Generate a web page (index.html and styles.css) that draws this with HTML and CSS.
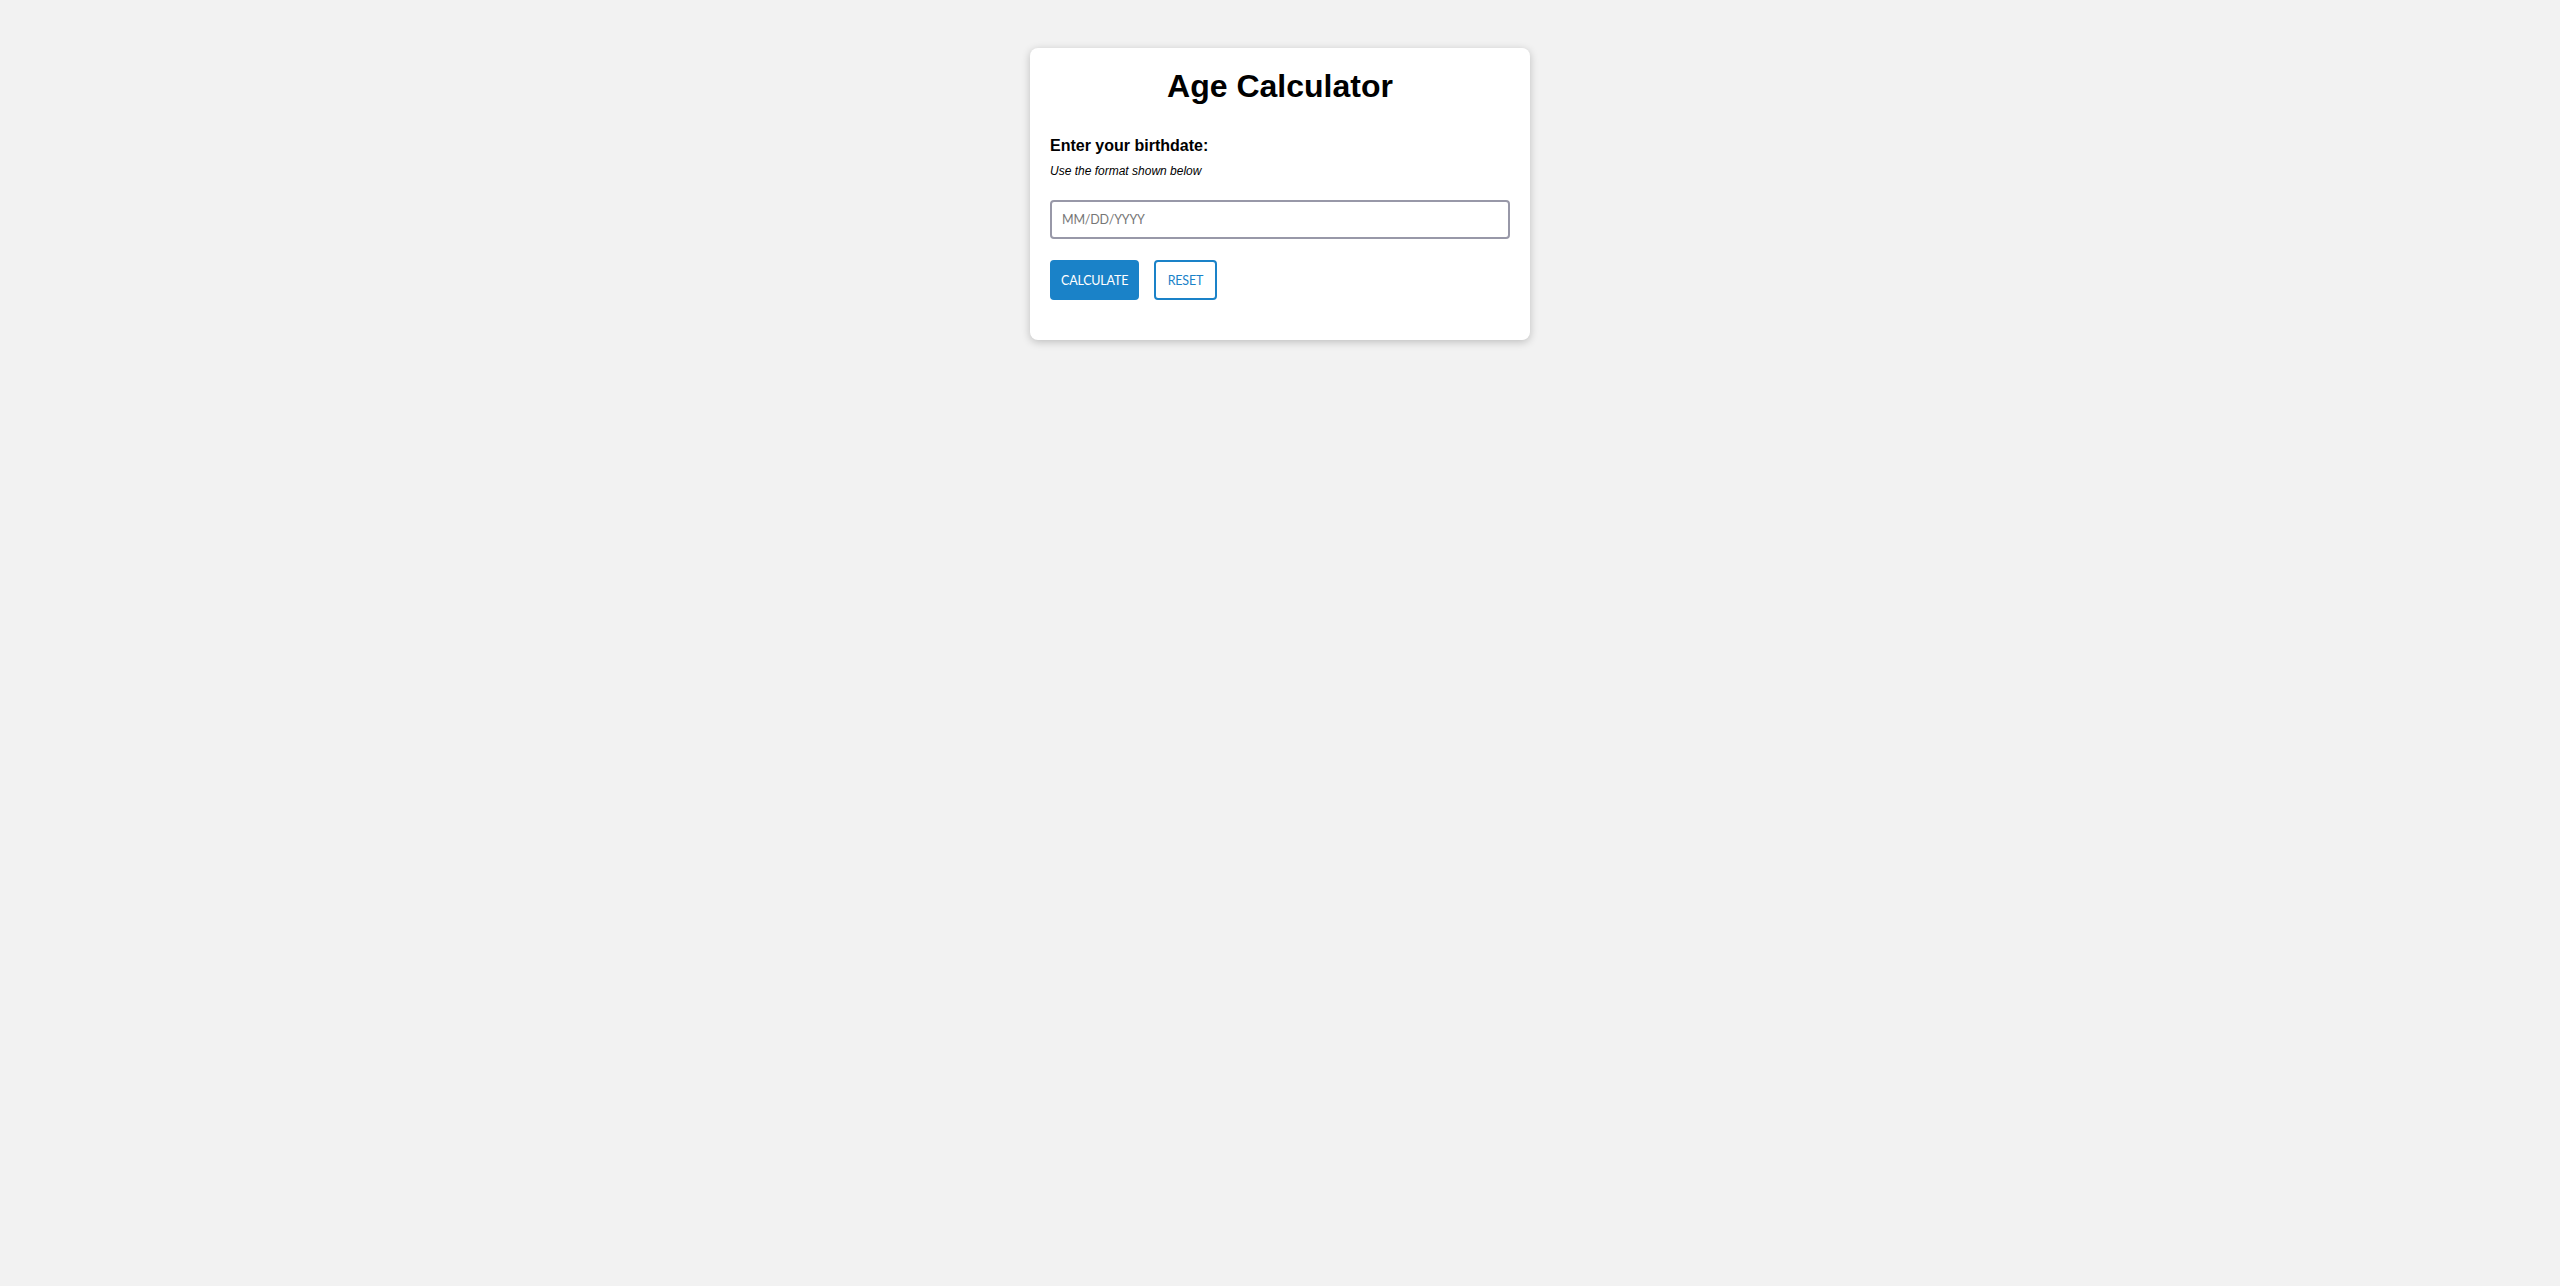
FILE: index.html
```html
<!DOCTYPE html>
<html lang="en">
<head>
<meta charset="utf-8">
<title>Age Calculator</title>
<link rel="stylesheet" href="styles.css">
</head>
<body>
  <main class="card">
    <h1 class="title">Age Calculator</h1>
    <label class="label" for="birthdate">Enter your birthdate:</label>
    <p class="hint">Use the format shown below</p>
    <input class="date-input" id="birthdate" type="text" placeholder="MM/DD/YYYY">
    <div class="actions">
      <button class="btn btn-primary" type="button">CALCULATE</button>
      <button class="btn btn-outline" type="button">RESET</button>
    </div>
  </main>
</body>
</html>
```
FILE: styles.css
```css
html, body {
  margin: 0;
  padding: 0;
}

body {
  background: #f2f2f2;
  font-family: "Liberation Sans", Arial, sans-serif;
  color: #000;
  min-height: 1286px;
}

.card {
  box-sizing: border-box;
  width: 500px;
  margin: 48px auto 0;
  padding: 20px 20px 40px;
  background: #fff;
  border-radius: 8px;
  box-shadow: 0 2px 8px rgba(0, 0, 0, 0.22);
  display: flex;
  flex-direction: column;
}

.title {
  margin: 0;
  font-size: 32px;
  font-weight: bold;
  text-align: center;
  line-height: 36px;
}

.label {
  display: block;
  margin-top: 33px;
  font-size: 16px;
  font-weight: bold;
  line-height: 18px;
}

.hint {
  margin: 9px 0 0;
  font-size: 12px;
  font-style: italic;
  line-height: 14px;
}

.date-input {
  box-sizing: border-box;
  margin-top: 22px;
  width: 100%;
  height: 39px;
  padding: 0 10px;
  border: 2px solid #9898a8;
  border-radius: 4px;
  font-family: Lato, "Open Sans", sans-serif;
  font-size: 12.5px;
  letter-spacing: -0.2px;
  color: #000;
  background: #fff;
  outline: none;
}

.date-input::placeholder {
  color: #767676;
}

.actions {
  display: flex;
  gap: 15px;
  margin-top: 21px;
}

.btn {
  box-sizing: border-box;
  height: 40px;
  border-radius: 4px;
  font-family: Lato, "Open Sans", sans-serif;
  font-size: 12.5px;
  letter-spacing: -0.2px;
  cursor: pointer;
}

.btn-primary {
  padding: 0 9px;
  background: #1a82c8;
  color: #fff;
  border: 2px solid #1a82c8;
}

.btn-outline {
  padding: 0 11.5px;
  background: #fff;
  color: #1a82c8;
  border: 2px solid #1a82c8;
}
```
